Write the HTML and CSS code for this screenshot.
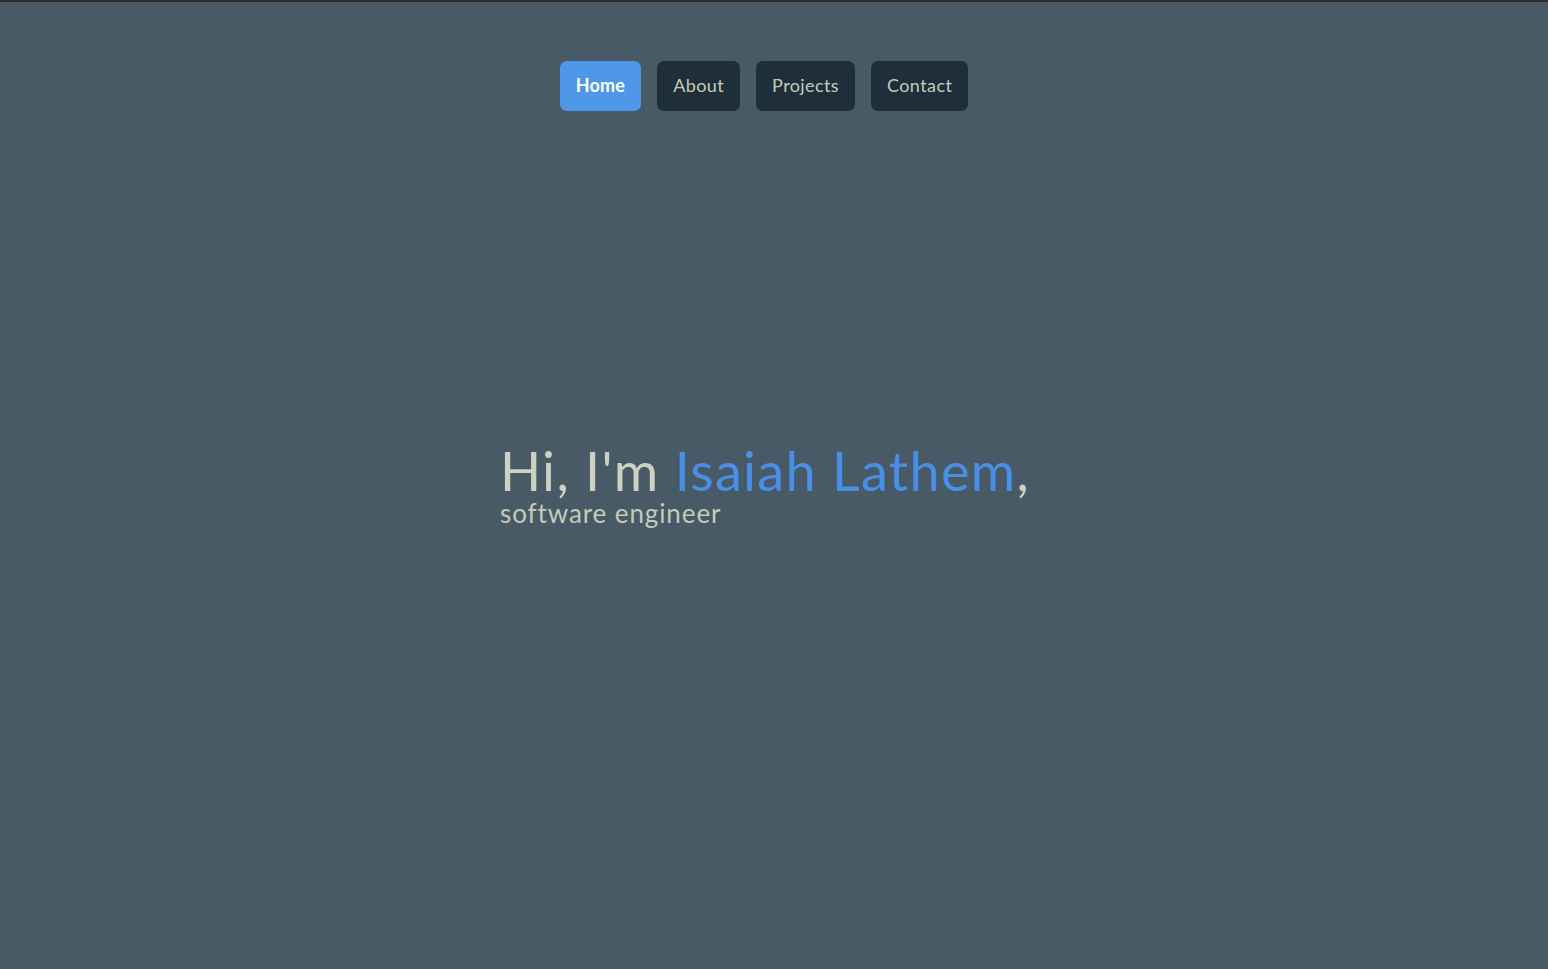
FILE: index.html
```html
<!DOCTYPE html>
<html lang="en">
<head>
<meta charset="utf-8">
<title>Isaiah Lathem</title>
<link rel="stylesheet" href="styles.css">
</head>
<body>
<div class="page">
  <nav class="nav">
    <a class="nav-btn active" href="#">Home</a>
    <a class="nav-btn" href="#">About</a>
    <a class="nav-btn" href="#">Projects</a>
    <a class="nav-btn" href="#">Contact</a>
  </nav>
  <main class="hero">
    <div class="intro">
      <h1 class="title">Hi, I'm <span class="name">Isaiah Lathem</span>,</h1>
      <p class="subtitle">software engineer</p>
    </div>
  </main>
</div>
</body>
</html>
```
FILE: styles.css
```css
html, body {
  margin: 0;
  padding: 0;
  height: 100%;
}
body {
  background: #475a66;
  border-top: 2px solid #2e2e2e;
  box-sizing: border-box;
  font-family: "Lato", "Noto Sans", sans-serif;
  color: #cdd1bf;
}
.page {
  height: 100%;
  display: flex;
  flex-direction: column;
  padding-right: 20px;
}
.nav {
  display: flex;
  justify-content: center;
  gap: 16px;
  padding-top: 59px;
}
.nav-btn {
  display: flex;
  align-items: center;
  justify-content: center;
  height: 50px;
  padding: 0 16px 3px;
  box-sizing: border-box;
  border-radius: 7px;
  background: #1e2f3b;
  color: #c6cbb9;
  font-size: 18px;
  letter-spacing: 0.4px;
  text-decoration: none;
}
.nav-btn.active {
  background: #4f97e8;
  color: #ffffff;
  font-weight: 700;
  letter-spacing: 0.2px;
}
.hero {
  flex: 1;
  display: flex;
  justify-content: center;
  align-items: flex-start;
  padding-top: 332px;
}
.intro {
  width: 528px;
}
.title {
  margin: 0;
  font-size: 54px;
  font-weight: 400;
  line-height: 56px;
  letter-spacing: 1.3px;
  color: #cdd1bf;
  white-space: nowrap;
}
.name {
  color: #4a8fe6;
}
.subtitle {
  margin: 0;
  font-size: 26px;
  line-height: 28px;
  letter-spacing: 0.9px;
  color: #c6cbb9;
}
```
